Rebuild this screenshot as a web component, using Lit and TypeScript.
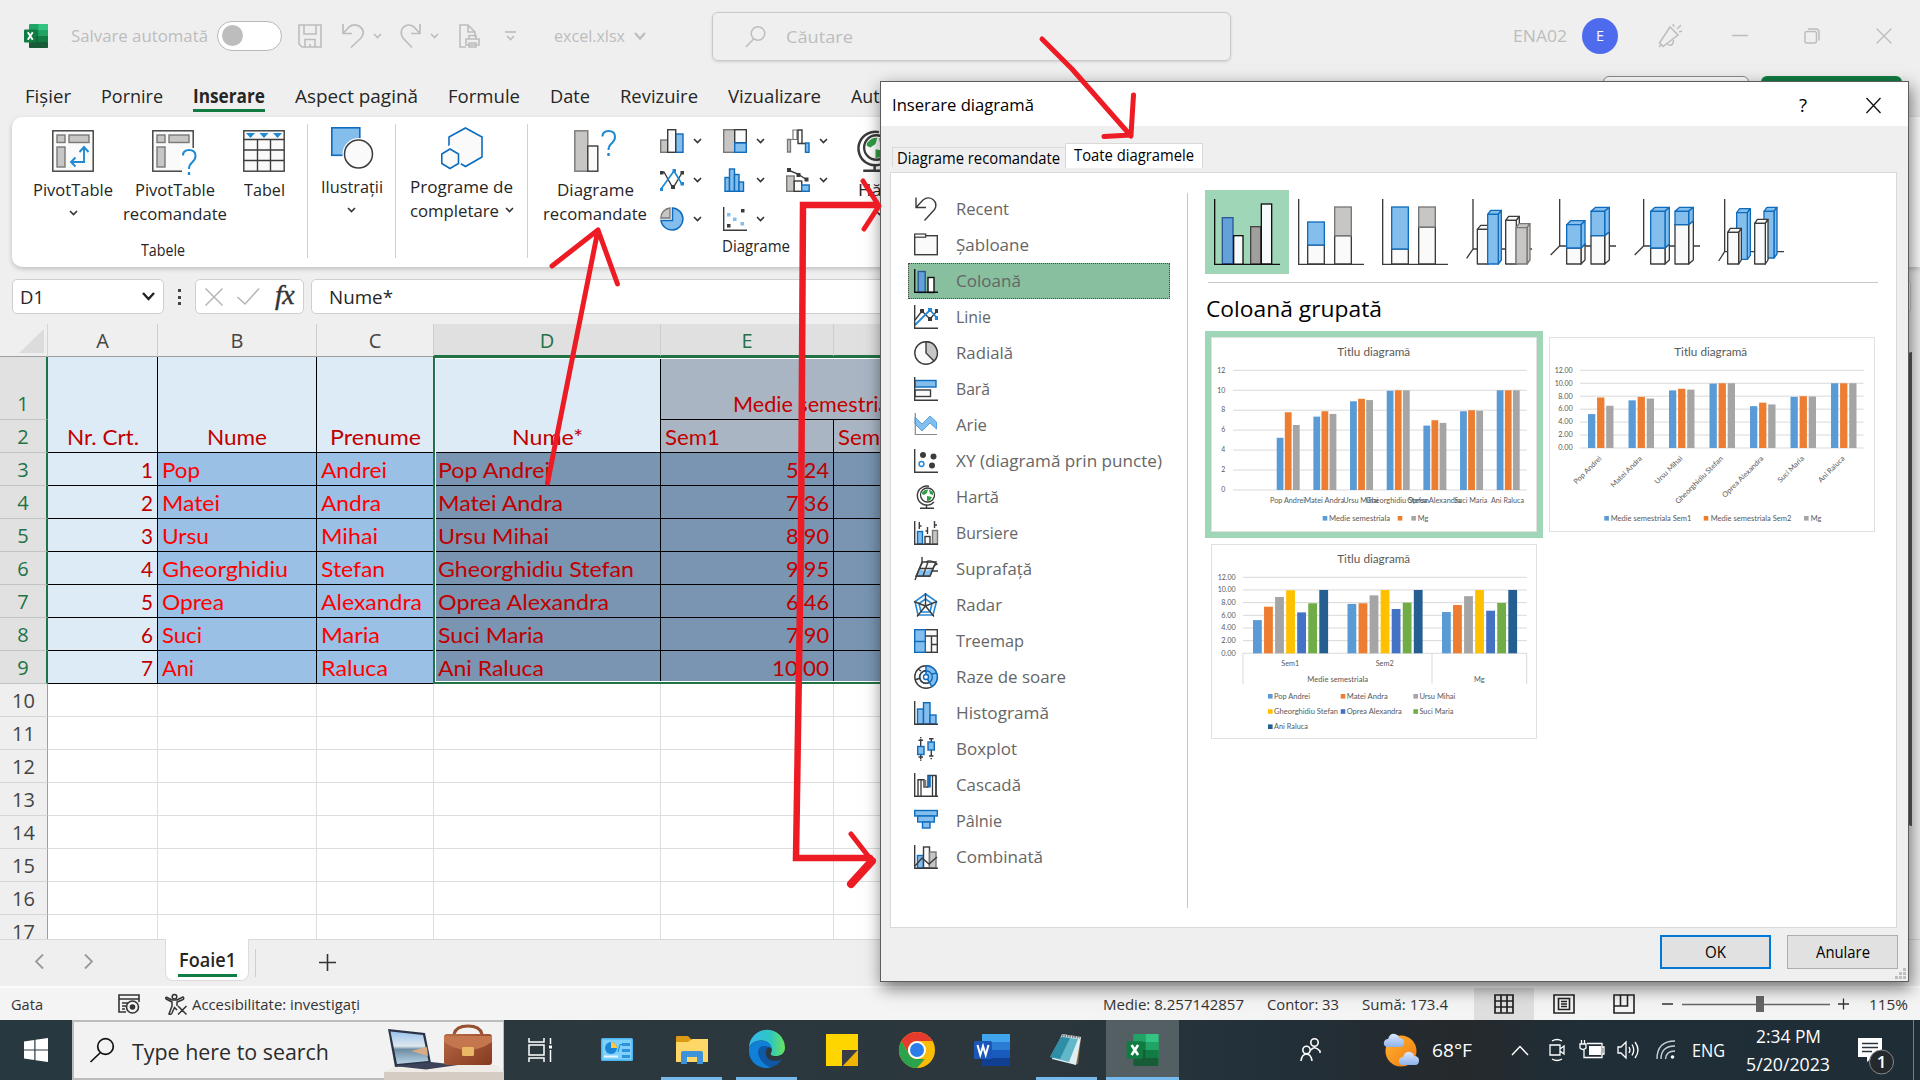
import { LitElement, html, svg, css } from "lit";
import { customElement, property } from "lit/decorators.js";
import { classMap } from "lit/directives/class-map.js";

/** A run of text squeezed or stretched horizontally to a given width. */
@customElement("fit-text")
class FitText extends LitElement {
  @property({ type: Number }) w = 0;
  static styles = css`
    :host { display: inline-block; white-space: nowrap; line-height: 24px; height: 24px; flex: none; text-align: left; }
    span { display: inline-block; transform-origin: 0 50%; }
  `;
  firstUpdated() {
    const s = this.renderRoot.querySelector("span") as HTMLElement;
    const natural = s.getBoundingClientRect().width;
    this.style.width = this.w + "px";
    if (natural > 0) s.style.transform = `scaleX(${this.w / natural})`;
  }
  render() { return html`<span><slot></slot></span>`; }
}

const D = "#3b3b3b", B = "#0f6cbd", LB = "#83beec", G = "#c8c6c4", GD = "#797774", W = "#fafafa";
const box = (x: number, y: number, w: number, h: number, f: string, s: string, sw = 1.4) =>
  svg`<rect x=${x} y=${y} width=${w} height=${h} fill=${f} stroke=${s} stroke-width=${sw}></rect>`;
const ln = (d: string, s = D, sw = 1.4, f = "none") => svg`<path d=${d} fill=${f} stroke=${s} stroke-width=${sw}></path>`;
const ic = (w: number, h: number, body: unknown, vb = `0 0 ${w} ${h}`) =>
  html`<svg class="ic" width=${w} height=${h} viewBox=${vb}>${body}</svg>`;
const chev = (c = "#333", w = 9) => ic(w, 6, ln("M1 1L4.5 4.5L8 1", c, 1.6), "0 0 9 6");
const axis = ln("M.7 0V23.3H24", D, 1.4);

const excelLogo = (w: number, h: number) => ic(w, h, svg`
  <rect x="5" y="0" width="19" height="24" rx="1" fill="#21a366"></rect><rect x="14.500" y="0" width="9.500" height="6" fill="#33c481"></rect>
  <rect x="5" y="6" width="9.500" height="6" fill="#107c41"></rect><rect x="5" y="12" width="9.500" height="6" fill="#185c37"></rect>
  <rect x="14.500" y="6" width="9.500" height="6" fill="#21a366"></rect><rect x="14.500" y="12" width="9.500" height="6" fill="#107c41"></rect><rect x="5" y="18" width="19" height="6" rx="1" fill="#185c37"></rect>
  <rect x="0" y="5.500" width="12.500" height="13" rx="1" fill="#107c41"></rect>
  <path d="M3.800 8.300L8.700 15.700M8.700 8.300L3.800 15.700" stroke="#fff" stroke-width="1.900"></path>`, "0 0 24 24");
const globe = svg`<path d="M15 1.2A9.6 9.6 0 1 0 20 17" fill="none" stroke=${D} stroke-width="1.4"></path>
  <circle cx="13.5" cy="10" r="7" fill="#fff" stroke=${D} stroke-width="1.3"></circle>
  <path d="M8 7.5Q11 4 14 4.5L13 8L10 10L8 9Z M15 4.5L19 7V10L16 9Z M13 11L18 12L16 15.5L13 16Z" fill="#2f9e44"></path>
  <path d="M12.5 19.5V23M6 23.3H20" stroke=${D} stroke-width="1.4"></path>`;

const listIcons: Record<string, unknown> = {
  recent: ln("M2 .5V10.5H12M2 10.5L9 3Q14-1 19 2.5Q24 7 20.5 12.5L10.5 23.5"),
  templates: [box(.7, 2.7, 22.6, 19, W, D), box(.7, 1, 11, 3.2, W, D, 1.2)],
  column: [box(4.2, 2.5, 7, 21, "#62a2d8", "#2b579a"), box(14, 8.5, 6, 15, "#fff", "#111"), ln("M.7 0V23.3H24", "#111")],
  line: [ln("M1 15L8 6L16 14L23 6"), ln("M1 20L16 5L23 13", "#2488d8", 1.8), svg`<path d="M6 4h4v4h-4zM14 12h4v4h-4zM21 4h3v4h-3z" fill=${D}></path><path d="M14 3h4v4h-4zM21 11h3v4h-3z" fill="#2488d8"></path>`, axis],
  pie: [svg`<circle cx="12" cy="12" r="11.2" fill=${W} stroke=${D} stroke-width="1.4"></circle>`, ln("M12 .8A11.2 11.2 0 0 1 20 20L12 12Z", D, 1.4, G)],
  bar: [box(1, 3.5, 21, 6.5, LB, B), box(1, 13, 15.5, 6.5, W, D), axis],
  area: [ln("M1 4L8 11L16 3L22.5 9V16L16 10L8 18L1 11Z", "#5aa5e0", 1, LB), ln("M1.3 0V21.5H23", "#8a8886", 1.2)],
  scatter: [svg`<circle cx="9" cy="6" r="3" fill=${D}></circle><circle cx="19.5" cy="7.5" r="3" fill=${D}></circle><circle cx="18" cy="16.5" r="3" fill=${D}></circle><circle cx="7.5" cy="15" r="2.4" fill="#fff" stroke="#2488d8" stroke-width="1.5"></circle>`, axis],
  map: globe,
  stock: [box(3.5, 10.5, 5, 12.5, LB, B), box(11, 15.5, 5, 7.5, W, D), box(18.5, 9.5, 5, 13.5, G, GD), ln("M5.3 1V8M5.3 5H7.5M13.5 6V13M13.5 10H11.5M20.5 0V7M20.5 4H23"), axis],
  surface: [ln("M8.5 5H22L16 19H2Z", D, 1.4, W), svg`<path d="M5 12L11 14L19 12L16.5 19H2Z" fill=${LB}></path>`, ln("M8 0V5L1 23M6 11.500H19M14 5L9 19M24 14H18M12 5Q16 2 23 7L20 9L16 19H2")],
  radar: [ln("M11.5 1L22.5 8.5L19 22H4L1 8.5Z", "#2488d8", 1.6, "#fff"), ln("M11.5 6L18 10.5L16 19H7L5 10.5Z", "#2488d8", 1.6), ln("M11.5 0V13L3 23.5M11.5 13L20 23.5M11.5 13L0 8.5M11.5 13L23 8.5")],
  treemap: [box(11, .7, 12.3, 22.6, W, D), box(.7, .7, 10.6, 22.6, LB, B), ln("M.7 12.5H11.3", B), ln("M11.3 7H23.3M17.5 7V23M17.5 15.5H23.3")],
  sunburst: [svg`<circle cx="12" cy="12" r="11.2" fill=${W} stroke=${D} stroke-width="1.4"></circle>`, ln("M12 .8A11.2 11.2 0 0 1 18 21.6L12 12Z", B, 1.5, LB), svg`<circle cx="12" cy="12" r="6.3" fill="none" stroke=${B} stroke-width="1.4"></circle><circle cx="12" cy="12" r="2.5" fill="#fff" stroke=${B} stroke-width="1.4"></circle>`, ln("M12 5.7A6.3 6.3 0 1 0 15 17.500M1 15L6 13M7 6L4 4"), ln("M17.500 9L23 8", B)],
  histogram: [box(3.5, 8, 6, 15, LB, B), box(9.5, 1.7, 6.5, 21.3, LB, B), box(16, 14, 6, 9, LB, B), axis],
  boxplot: [ln("M6.7 2V22M17.3 1V19M4.5 3.2H9M4.5 20H9M15 1.7H19.5M15 19H19.5"), svg`<path d="M6 0h1.5v1.3h-1.5zM6 22.5h1.5v1.3h-1.5zM16.5 21h1.5v1.3h-1.5z" fill=${D}></path>`, box(3.7, 9.5, 6.3, 8, LB, B), box(14, 5, 6.3, 8, LB, B)],
  waterfall: [ln("M4 23V6.7H10V14H14V2.5H22V23"), ln("M7 7V23M18.5 3V23M22 3V23", D, 1.3), ln("M11 7V14.5", GD, 2.6), ln("M15.5 14.5V2.5", B, 2.6), axis],
  funnel: [box(.7, 1.5, 22.6, 5.5, LB, B), box(3.7, 7, 16.6, 6, LB, B), box(8.5, 13, 7.5, 6, LB, B)],
  combo: [box(3.5, 10.5, 6, 12.5, LB, B), box(9.5, 2, 6, 21, W, D), box(15.5, 7, 6.5, 16, G, GD), ln("M1 21L8 13L15 19L23 12"), axis],
};
const kinds: [string, number, string][] = [
  ["Recent", 53, "recent"], ["Șabloane", 73, "templates"], ["Coloană", 65, "column"], ["Linie", 35, "line"], ["Radială", 57, "pie"], ["Bară", 34, "bar"],
  ["Arie", 31, "area"], ["XY (diagramă prin puncte)", 206, "scatter"], ["Hartă", 43, "map"], ["Bursiere", 62, "stock"], ["Suprafață", 76, "surface"],
  ["Radar", 46, "radar"], ["Treemap", 68, "treemap"], ["Raze de soare", 110, "sunburst"], ["Histogramă", 93, "histogram"], ["Boxplot", 61, "boxplot"],
  ["Cascadă", 65, "waterfall"], ["Pâlnie", 46, "funnel"], ["Combinată", 87, "combo"],
];

/* A column with a visible top and right side, for the 3-D chart kinds. */
const prism = (x: number, y: number, w: number, h: number, dx: number, dy: number, f: string, s: string) =>
  svg`<g fill=${f} stroke=${s} stroke-width="4" stroke-linejoin="round"><path d=${`M${x} ${y}L${x + dx} ${y - dy}H${x + w + dx}L${x + w} ${y}Z`}></path>
  <path d=${`M${x + w} ${y}L${x + w + dx} ${y - dy}V${y + h - dy}L${x + w} ${y + h}Z`}></path><rect x=${x} y=${y} width=${w} height=${h}></rect></g>`;
const subtypes: [number, unknown][] = [
  [72, [box(97, 113, 32, 138, "#62a2d8", "#2b579a", 4), box(131, 167, 28, 86, "#f7fafa", "#111", 4), box(182, 140, 30, 112, "#a19f9d", "#444", 4), box(214, 72, 31, 180, "#f7fafa", "#111", 4), ln("M74 57V253H270", "#111", 4)]],
  [324, [box(353, 195, 50, 57, W, D, 4), box(353, 126, 50, 69, LB, B, 4), box(434, 167, 50, 85, W, D, 4), box(434, 81, 50, 86, G, GD, 4), ln("M326 57V253H522", D, 4)]],
  [576, [box(605, 207, 50, 45, W, D, 4), box(605, 81, 50, 126, LB, B, 4), box(686, 141, 50, 111, W, D, 4), box(686, 81, 50, 60, G, GD, 4), ln("M578 57V253H774", D, 4)]],
  [828, [ln("M849 57V207L830 235M849 207H1026", D, 4), prism(862, 148, 32, 104, 10, 12, W, D), prism(893, 103, 32, 149, 9, 12, LB, B), prism(947, 121, 32, 131, 9, 12, W, D), prism(978, 143, 33, 109, 9, 12, G, GD)]],
  [60, [ln("M89 57V198L62 225M89 198H258", D, 4), prism(110, 204, 43, 48, 12, 12, W, D), prism(110, 134, 43, 70, 12, 12, LB, B), prism(183, 167, 41, 85, 14, 12, W, D), prism(183, 94, 41, 73, 14, 12, LB, B)]],
  [312, [ln("M341 57V198L314 225M341 198H510", D, 4), prism(362, 204, 43, 48, 13, 12, W, D), prism(362, 94, 43, 110, 13, 12, LB, B), prism(435, 134, 41, 118, 14, 12, W, D), prism(435, 94, 41, 40, 14, 12, LB, B)]],
  [564, [ln("M584 57V215L566 243M584 215H762", D, 4), prism(620, 98, 32, 140, 9, 12, LB, B), prism(702, 94, 30, 140, 9, 12, LB, B), prism(593, 157, 33, 95, 8, 12, W, D), prism(674, 130, 32, 122, 8, 12, W, D)]],
];

/* Chart data: first semester, second semester, overall mean. */
const people = ["Pop Andrei", "Matei Andra", "Ursu Mihai", "Gheorghidiu Stefan", "Oprea Alexandra", "Suci Maria", "Ani Raluca"];
const nameW = [36, 41, 36, 64, 55, 34, 34];
const sem1 = [5.24, 7.36, 8.9, 9.95, 6.46, 7.9, 10], sem2 = [7.8, 7.9, 9.15, 10, 7, 8, 10], mg = [6.52, 7.63, 9.02, 10, 6.73, 7.95, 10];
const C = ["#5b9bd5", "#ed7d31", "#a5a5a5", "#ffc000", "#4472c4", "#70ad47", "#255e91"];
const tx = (x: number, y: number, s: string, w: number, a = "start", size = 7.2) =>
  svg`<text x=${x} y=${y} font-size=${size} text-anchor=${a} textLength=${w} lengthAdjust="spacingAndGlyphs" fill="#595959">${s}</text>`;
const yAxis = (x0: number, x1: number, top: number, unit: number, lx: number, dec: boolean) => [12, 10, 8, 6, 4, 2, 0].map((v) => {
  const y = top + (12 - v) * unit, s = dec ? v.toFixed(2) : String(v);
  return svg`<path d=${`M${x0} ${y}H${x1}`} stroke="#d9d9d9"></path>${tx(lx, y + 2.3, s, dec ? (v > 9 ? 18 : 14.5) : v > 9 ? 8 : 4, "end", 7)}`;
});
const bar = (x: number, y0: number, w: number, h: number, c: string) => svg`<rect x=${x} y=${y0 - h} width=${w} height=${h} fill=${c}></rect>`;
const key = (x: number, y: number, c: string) => svg`<rect x=${x} y=${y - 2.3} width="4.6" height="4.6" fill=${c}></rect>`;
const title = (x: number) => tx(x, 19, "Titlu diagramă", 73, "middle", 11.5);

const chart1 = html`<svg class="chart" width="326" height="195">${title(162.7)}${yAxis(22, 315.7, 33.3, 9.97, 14.3, false)}
  ${people.map((n, i) => svg`${[sem1, sem2, mg].map((s, k) => bar(65.7 + i * 36.67 + k * 8.1, 153, 6.8, s[i] * 9.97, C[k]))}
    ${tx(76.5 + i * 36.67, 166, n, nameW[i] - 1, "middle")}`)}
  ${key(111.7, 181.3, C[0])}${tx(118, 184, "Medie semestriala", 61)}${key(186.7, 181.3, C[1])}${key(200.3, 181.3, C[2])}${tx(206.7, 184, "Mg", 10.6)}</svg>`;
const chart2 = html`<svg class="chart" width="326" height="195">${title(161.7)}${yAxis(31, 314.7, 33.3, 6.475, 23.7, true)}
  ${people.map((n, i) => svg`${[sem1, sem2, mg].map((s, k) => bar(39 + i * 40.5 + k * 9.1, 111, 7.3, s[i] * 6.475, C[k]))}
    <g transform=${`translate(${53 + i * 40.5} 122) rotate(-45)`}>${tx(0, 0, n, nameW[i], "end")}</g>`)}
  ${key(55.3, 181.3, C[0])}${tx(61.7, 184, "Medie semestriala Sem1", 80.6)}${key(154.7, 181.3, C[1])}${tx(161.7, 184, "Medie semestriala Sem2", 80.6)}${key(255, 181.3, C[2])}${tx(261.7, 184, "Mg", 10.6)}</svg>`;
const chart3 = html`<svg class="chart" width="326" height="195">${title(162.7)}${yAxis(32, 315.7, 33.3, 6.333, 24.7, true)}
  ${[sem1, sem2, mg].map((s, g) => s.map((v, i) => bar(42 + g * 94.5 + i * 11.05, 109.3, 8.8, v * 6.333, C[i])))}
  <path d="M32 109V140M221 109V140M315.7 109V140" stroke="#d9d9d9" fill="none"></path>
  ${tx(79.3, 122, "Sem1", 18, "middle")}${tx(173.7, 122, "Sem2", 18, "middle")}${tx(126.7, 138, "Medie semestriala", 60.7, "middle")}${tx(268.3, 138, "Mg", 10.6, "middle")}
  ${people.map((n, i) => { const x = 57 + (i % 3) * 72.7, y = 152.3 + Math.floor(i / 3) * 15.2; return svg`${key(x, y, C[i])}${tx(x + 6, y + 2.7, n, nameW[i])}`; })}</svg>`;

const rows: [string, number, string, number, number, string, number][] = [
  ["Pop", 38, "Andrei", 66, 112, "5.24", 43], ["Matei", 58, "Andra", 60, 125, "7.36", 43], ["Ursu", 47, "Mihai", 57, 111, "8.90", 43],
  ["Gheorghidiu", 126, "Stefan", 64, 196, "9.95", 43], ["Oprea", 62, "Alexandra", 101, 171, "6.46", 43], ["Suci", 40, "Maria", 59, 106, "7.90", 43], ["Ani", 32, "Raluca", 67, 106, "10.00", 57],
];

/* Ribbon icons */
const pivot = [box(.8, .8, 40.4, 40.4, W, D), box(5, 5, 8, 7.5, G, GD), box(17, 5, 20, 7.5, G, GD), box(5, 17, 8, 20, G, GD)];
const q = (x: number, y: number) => svg`<g transform=${`translate(${x} ${y})`}><path d="M1 6.5Q1 1 7 1Q13.5 1 13.5 7Q13.5 10.5 10 13.5Q7 16 7 20" fill="none" stroke="#1f8ad2" stroke-width="2"></path><rect x="5.8" y="23" width="2.4" height="3" fill="#1f8ad2"></rect></g>`;
const rec = ic(46, 42, [pivot, svg`<path d="M28 18h18v27h-16v-8h-2z" fill="#fff"></path>`, q(30, 19)]);
const small = [
  [box(.7, 11, 7, 12.3, G, GD), box(15.5, 5, 7.5, 18.3, LB, B), box(7.7, .7, 8, 22.6, W, D)],
  [box(.7, .7, 11, 22.6, G, GD), box(11.7, .7, 11.6, 13, W, D), box(11.7, 14, 11.6, 9.3, LB, B)],
  [ln("M1.5 23V10.5H4.5V23Z", GD, 1.3, G), ln("M4.5 10.5H7V1H11V10.5H7", GD, 1.2), ln("M12 1H16V14.5H12Z"), ln("M16 14.5H20", D), box(19.5, 14, 3.5, 9.3, LB, B)],
  [ln("M1 5L4 4L13 20L22.5 4"), ln("M1 21L14 3L22.5 17", "#1f8ad2", 1.7), svg`<path d="M0 3h3.5v3.5h-3.5zM11 17h4v4h-4zM20.5 3h3.5v3.5h-3.5z" fill=${D}></path><path d="M12.5 1h3.5v3.5h-3.5zM20.5 14h3.5v3.5h-3.5zM0 20h3v3h-3z" fill="#1f8ad2"></path>`],
  [box(2, 9.5, 4.5, 13.8, LB, B), box(6.5, 1, 5, 22.3, LB, B), box(11.5, 6.5, 4.5, 16.8, LB, B), box(16, 14, 4.5, 9.3, LB, B)],
  [box(.7, 8, 7.5, 15.3, G, GD), box(8.2, 13, 7.5, 10.3, W, D), box(15.7, 17, 7.5, 6.3, LB, B), ln("M2 2L12 6L21 12"), svg`<path d="M1 0h4v4h-4zM10.5 5h4v4h-4zM18.5 9.500h4v4h-4z" fill=${D}></path>`],
  [ln("M12.500 1A11 11 0 1 1 1 13.500H12.500Z", B, 1.5, LB), ln("M10 11V1A10 10 0 0 0 .8 11Z", GD, 1.3, G)],
  [ln("M.7 0V23.3H24"), svg`<path d="M4 17h3.500v3.500h-3.500zM18 2h3.500v3.500h-3.500z" fill=${D}></path><path d="M4 6h3.500v3.500h-3.500zM10 10.500h3.500v3.500h-3.500zM17.500 15h3.500v3.500h-3.500z" fill=${LB}></path>`],
];

@customElement("app-root")
class AppRoot extends LitElement {
  static styles = css`
    :host { display: block; width: 1920px; height: 1080px; position: relative; overflow: hidden; background: #efefef; color: #262626; font-family: "Open Sans", "Noto Sans", sans-serif; font-size: 17px; }
    * { box-sizing: border-box; }
    svg { display: block; overflow: visible; flex: none; }
    .page { display: flex; flex-direction: column; width: 1920px; height: 1080px; }
    .row { display: flex; align-items: center; }
    .titlebar { height: 60px; padding-left: 24px; color: #bdbdbd; flex: none; margin-bottom: 12px; }
    .toggle { width: 65px; height: 30px; border: 1px solid #b8b8b8; border-radius: 15px; background: #fff; margin: 12px 16px 0 9px; padding: 3px 4px; }
    .knob { width: 21px; height: 21px; border-radius: 50%; background: #bdbdbd; }
    .titlebar > fit-text, .titlebar > svg { margin-top: 12px; }
    .titlebar .autosave { margin-left: 23px; }
    .m9 { margin-left: 9px; } .m20 { margin-left: 20px; } .m18 { margin-left: 18px; } .m26 { margin-left: 25px; } .m38 { margin-left: 38px; }
    .search { display: flex; align-items: center; width: 519px; height: 49px; border: 1px solid #c9c9c9; border-radius: 6px; box-shadow: 0 1px 3px #0002; margin: 13px 0 0 66px; padding-left: 32px; gap: 20px; }
    .user { margin-left: 282px; }
    .avatar { width: 36px; height: 36px; border-radius: 50%; background: #4f6bed; color: #fff; display: flex; align-items: center; justify-content: center; font-size: 14px; margin: 12px 40px 0 15px; }
    .winbtns { display: flex; align-items: center; gap: 56px; margin: 12px 0 0 50px; }
    .tabs { height: 45px; display: flex; padding: 12px 0 0 25px; font-size: 19px; flex: none; gap: 30px; }
    .tab { height: 28px; display: flex; flex: none; }
    .tab.on { font-weight: 700; height: 28px; border-bottom: 3px solid #107c41; }
    .corner { display: flex; margin-left: auto; gap: 12px; margin-top: -8px; margin-right: 18px; }
    .corner i { display: block; width: 146px; height: 30px; border: 1px solid #8a8a8a; border-radius: 6px; background: #fff; }
    .corner i.g { width: 141px; background: #107c41; border: 0; }
    .ribbon { height: 150px; margin: 0 0 12px 12px; background: #fff; border-radius: 10px 0 0 10px; box-shadow: 0 2px 5px #0003; display: flex; padding-top: 7px; flex: none; overflow: hidden; clip-path: inset(-2px 0 -8px -6px); }
    .grp { display: flex; flex-direction: column; border-right: 1px solid #d1d1d1; height: 134px; flex: none; }
    .btns { display: flex; height: 115px; }
    .b { display: flex; flex-direction: column; align-items: center; text-align: center; flex: none; }
    .b svg.ic { margin-bottom: 6px; }
    .b.tbl { margin-left: 6px; }
    .b.mapb { margin-left: 7px; }
    .g1 { width: 296px; padding-left: 21px; } .g1 .btns { padding-top: 6px; gap: 10px; }
    .g2 { width: 88px; padding: 3px 0 0; align-items: center; } .g3 { width: 132px; padding-top: 3px; align-items: center; }
    .g4 { width: 500px; border: 0; padding: 0 0 0 15px; }
    .g4 .btns { padding-top: 6px; }
    .cap { font-size: 16px; } .g1 .cap { padding-left: 108px; height: 20px; } .g4 .cap { padding-left: 179px; margin-top: -1px; }
    .chevbox { height: 24px; display: flex; align-items: center; justify-content: center; gap: 6px; padding-bottom: 2px; }
    .chevbox fit-text { margin-top: 2px; }
    .b .chevbox svg.ic { margin: 0; }
    .smallgrid { display: grid; grid-template-columns: repeat(3, 63px); grid-auto-rows: 24px; row-gap: 15px; margin: -1px 0 0 13px; }
    .smallgrid div { display: flex; gap: 9px; align-items: center; }
    .fbar { height: 36px; display: flex; align-items: center; padding: 0 0 1px 12px; flex: none; font-size: 18px; margin-bottom: 9px; }
    .fbox { height: 35px; background: #fff; border: 1px solid #cfcfcf; border-radius: 5px; display: flex; align-items: center; flex: none; }
    .name { width: 152px; padding: 0 8px 0 7px; justify-content: space-between; }
    .dots { width: 4px; height: 16px; margin: 0 13px 0 14px; border-left: 3px dotted #444; }
    .fx { width: 109px; padding-left: 9px; gap: 14px; margin-right: 7px; }
    .fx i { font: italic 28px "Liberation Serif", serif; color: #333; line-height: 24px; margin: -4px 0 0 1px; letter-spacing: -0.5px; -webkit-text-stroke: 0.4px #333; }
    .formula { width: 1600px; padding-left: 17px; }
    .sheet { height: 615px; overflow: hidden; display: grid; background: #fff; flex: none; width: 1906px;
      grid-template-columns: 48px 110px 159px 117px 227px 173px 250px 822px; grid-template-rows: 33px 63px repeat(16, 33px); font-family: Lato, "Open Sans", sans-serif; font-size: 21.5px; }
    .ch2, .rh { font-family: "Open Sans", sans-serif; font-size: 20px; display: flex; align-items: center; justify-content: center; color: #444; background: #efefef; }
    .ch2 { border-right: 1px solid #cdcdcd; border-bottom: 1px solid #9f9f9f; padding-top: 1px; }
    .ch2.sel { background: #e0e0e0; color: #217346; border-bottom: 2px solid #217346; }
    .rh { border-right: 1px solid #9f9f9f; border-bottom: 1px solid #d5d5d5; line-height: 24px; align-items: flex-end; padding-bottom: 3px; }
    .rh.sel { background: #e1e1e1; color: #217346; border-right: 2px solid #217346; border-bottom-color: #c3c3c3; }
    .corner0 { border-right: 1px solid #d5d5d5; border-bottom: 1px solid #9f9f9f; background: #efefef; display: flex; align-items: flex-end; justify-content: flex-end; padding: 0 3px 3px 0; }
    .c { border-right: 1px solid #000; border-bottom: 1px solid #000; display: flex; align-items: flex-end; padding: 0 4px 3px; color: #c00000; overflow: hidden; }
    .c fit-text { line-height: 24px; }
    .c.e { border-color: #dedede; }
    .hd { background: #ddebf7; justify-content: center; } .num { background: #ddebf7; justify-content: flex-end; }
    .nm { background: #9bc0e6; color: #f00; } .dk { background: #7995b2; } .mid { background: #a9b5c3; }
    .r { justify-content: flex-end; }
    .merged { grid-area: 2 / 6 / 3 / 8; padding-left: 72px; padding-bottom: 3px; }
    .selbox { grid-area: 2 / 5 / 11 / 8; border: 2px solid #217346; margin: -1px 0 0 -1px; box-shadow: inset 0 0 0 1px #fff; z-index: 1; }
    .sheetbar { height: 49px; border-top: 1px solid #d8d8d8; display: flex; flex: none; padding-left: 35px; border-bottom: 2px solid #fbfbfb; }
    .stab { width: 84px; height: 42px; background: #fff; border: 1px solid #dcdcdc; border-top: 0; border-radius: 0 0 8px 8px; margin: -1px 6px 0 72px; display: flex; flex-direction: column; align-items: center; padding-top: 8px; font-size: 19px; font-weight: 600; }
    .stab div { height: 30px; border-bottom: 3px solid #107c41; padding: 0 1px; }
    .sep { width: 1px; height: 28px; background: #cfcfcf; margin: 9px 63px 0 0; }
    .nav { margin-top: 14px; } .nav.next { margin-left: 40px; }
    .status { height: 32px; background: #f4f4f4; font-size: 15px; display: flex; align-items: center; flex: none; padding-left: 11px; color: #333; }
    .s1 { margin-left: 75px; } .s2 { margin-left: 25px; } .acc { margin-left: 5px; } .avg { margin-left: 743px; } .cnt { margin-left: 23px; } .zoom { margin-left: 20px; } .s3 { margin-left: 8px; }
    .viewbtn { width: 60px; height: 32px; display: flex; align-items: center; justify-content: center; } .viewbtn.on { background: #dedede; margin-left: 26px; }
    .taskbar { height: 60px; background: linear-gradient(90deg, #283840, #2b383d 30%, #2b373c 55%, #22303a 66%, #25292c 76%, #202e37 82%, #1f2d36); display: flex; flex: none; color: #fff; }
    .start { width: 72px; display: flex; align-items: center; justify-content: center; }
    .tsearch { width: 432px; height: 60px; background: #f2f2f2; border: 2px solid #bcbcbc; border-right-width: 1px; display: flex; align-items: center; padding-left: 16px; color: #2b2b2b; font-size: 22px; }
    .tsearch fit-text { margin-left: 18px; margin-top: 1px; }
    .tsearch svg:last-child { margin-left: 55px; }
    .app { height: 60px; display: flex; align-items: center; justify-content: center; width: 61px; border-bottom: 3px solid transparent; padding-top: 2px; flex: none; }
    .app.run { border-color: #76b9ed; } .app.act { width: 73px; background: #545f64; }
    .apps { display: flex; gap: 14px; padding-left: 5px; } .app.view { margin-right: 2px; } .app.act { margin-left: -5px; }
    .tray { display: flex; align-items: center; font-size: 18px; padding-left: 121px; }
    .t1 { margin-left: 62px; } .t2 { margin-left: 12px; } .t3 { margin-left: 39px; } .t4 { margin-left: 20px; } .t5 { margin-left: 15px; } .t6 { margin-left: 13px; } .t7 { margin-left: 17px; } .t8 { margin-left: 17px; }
    .clock { display: flex; flex-direction: column; align-items: center; gap: 4px; margin-left: 21px; font-size: 18px; }
    .note { margin: 12px 0 0 28px; }
    .end { width: 1px; background: #75808a; margin-left: 19px; height: 60px; }

    .dialog { position: absolute; left: 880px; top: 81px; width: 1029px; height: 901px; background: #efefef; border: 1px solid #5c5c5c; box-shadow: 2px 6px 16px #0008; display: flex; flex-direction: column; color: #000; z-index: 3; font-size: 16px; }
    .dtitle { height: 44px; background: #fff; display: flex; align-items: center; padding: 2px 27px 0 11px; }
    .dtitle .qm { margin-left: auto; margin-right: 59px; font-size: 19px; }
    .dtabs { height: 46px; display: flex; align-items: flex-end; padding: 0 0 5px 11px; flex: none; }
    .dt { height: 20px; width: 173px; border: 1px solid #d9d9d9; border-bottom: 0; border-right: 0; padding-left: 4px; display: flex; align-items: center; }
    .dt.on { height: 25px; width: 138px; background: #fff; border-right: 1px solid #d9d9d9; padding: 0 0 2px 8px; margin-bottom: -1px; }
    .panel { margin: 0 0 0 9px; width: 1007px; height: 756px; background: #fff; border: 1px solid #d9d9d9; display: flex; flex: none; }
    .list { width: 297px; height: 715px; margin-top: 20px; padding-left: 17px; border-right: 1px solid #c6c6c6; display: flex; flex-direction: column; }
    .item { height: 36px; width: 262px; display: flex; align-items: center; gap: 18px; padding-left: 5px; border: 1px dotted transparent; color: #666; font-size: 17px; flex: none; position: relative; top: -2px; }
    .item.on { background: #87bf9f; border-color: #5c3b47; }
    .main { padding: 17px 0 0 17px; width: 690px; }
    .subs { display: flex; } .sub { width: 84px; height: 84px; padding: 9px; } .sub.on { background: #9fd6b8; }
    .hr { height: 1px; width: 670px; background: #c6c6c6; margin: 8px 0 13px 3px; }
    .h { font-size: 22.5px; margin-left: 1px; height: 35px; display: flex; align-items: center; padding-bottom: 9px; }
    .cards { display: grid; grid-template-columns: 338px 338px; grid-template-rows: 207px 207px; }
    .card { border: 6px solid transparent; width: 338px; height: 207px; } .card.on { border-color: #9fd6b8; }
    .chart { outline: 1px solid #e1e1e1; outline-offset: -1px; background: #fff; font-family: Lato, sans-serif; }
    .foot { display: flex; justify-content: flex-end; gap: 16px; padding: 7px 10px 0 0; }
    .btn { width: 111px; height: 34px; border: 1px solid #adadad; background: #e1e1e1; display: flex; align-items: center; justify-content: center; font-size: 15.5px; } .btn.ok { border: 2px solid #0078d7; }
    .grip { margin: -1px 2px 0 auto; }
    .edge { position: absolute; right: 0; top: 352px; width: 12px; height: 474px; border-left: 4px solid #5a5a5a; border-radius: 4px; z-index: 2; }
    .marks { position: absolute; left: 0; top: 0; z-index: 5; }
  `;

  titlebar() {
    const s = "#bdbdbd";
    return html`<div class="row titlebar">
      ${excelLogo(24, 24)}<fit-text class="autosave" w="137">Salvare automată</fit-text>
      <div class="toggle"><div class="knob"></div></div>
      ${ic(24, 24, [ln("M1 1H23V23H4L1 20Z", s, 1.6), ln("M6 1V10H18V1M7 23V15.500H17V23M12 20V23", s, 1.6)])}
      <span class="m20"></span>${ic(22, 24, ln("M1 0V9.500H10M1 9.500L7 3Q12-1 18 2.500Q24 8 19 14L9 23.500", s, 1.7))}
      <span class="m9"></span>${chev(s)}
      <span class="m18"></span>${ic(21, 24, ln("M20 0V9.500H11M20 9.500L14 3Q9-1 3.500 3Q-1 8 3 14L12 23.500", s, 1.7))}
      <span class="m9"></span>${chev(s)}
      <span class="m20"></span>${ic(21, 24, [ln("M7 23H1V1H9L16 8V13M9 1V8H16", s, 1.6), ln("M7 15H20V21H7ZM10 15V11.500H17V15M10 19H17V23H10Z", s, 1.6)])}
      <span class="m26"></span>${ic(11, 10, [ln("M0 1H11", s, 1.7), ln("M2 5L5.500 8.500L9 5", s, 1.6)])}
      <fit-text class="m38" w="71">excel.xlsx</fit-text><span class="m9"></span>${ic(12, 8, ln("M1 1L6 6.500L11 1", s, 2.2))}
      <div class="search">${ic(21, 22, [svg`<circle cx="13" cy="7.500" r="6.800" fill="none" stroke=${s} stroke-width="1.500"></circle>`, ln("M8.500 13L1 21", s, 1.5)])}<fit-text w="67">Căutare</fit-text></div>
      <fit-text class="user" w="54">ENA02</fit-text><div class="avatar"><fit-text w="8">E</fit-text></div>
      ${ic(24, 24, [ln("M12 3L20 11L5 22.500L1.500 19Z", s, 1.5), ln("M9 20Q15 24 15.500 16M15 0L16 3M19 5L23 1M21 8L24 7M1 23L4 20", s, 1.5)])}
      <div class="winbtns">${ic(16, 16, ln("M0 7.500H16", s, 1.5))}${ic(16, 16, [svg`<rect x="1" y="3.500" width="11.500" height="11.500" rx="2" fill="none" stroke=${s} stroke-width="1.500"></rect>`, ln("M4 1H11.500Q15 1 15 4V12.500", s, 1.5)])}${ic(16, 16, ln("M.5 .5L15.500 15.500M15.500 .5L.5 15.500", s, 1.4))}</div>
    </div>`;
  }

  ribbon() {
    const tabs: [string, number][] = [["Fișier", 46], ["Pornire", 62], ["Inserare", 72], ["Aspect pagină", 123], ["Formule", 72], ["Date", 40], ["Revizuire", 78], ["Vizualizare", 93], ["Automatizare", 112]];
    return html`<div class="tabs">${tabs.map(([t, w], i) => html`<div class=${classMap({ tab: true, on: i === 2 })}><fit-text w=${w}>${t}</fit-text></div>`)}
      <div class="corner"><i></i><i class="g"></i></div></div>
    <div class="ribbon">
      <div class="grp g1"><div class="btns">
        <div class="b">${ic(42, 42, [pivot, ln("M32 17V32H19M27.500 22L32 17L36.500 22M23.500 27.500L19 32L23.500 36.500", "#1f8ad2", 1.9)])}<fit-text w="80">PivotTable</fit-text><div class="chevbox">${chev()}</div></div>
        <div class="b">${rec}<fit-text w="80">PivotTable</fit-text><fit-text w="104">recomandate</fit-text></div>
        <div class="b tbl">${ic(42, 42, [box(.8, .8, 40.4, 40.4, W, D), ln("M.8 9.500H41M.8 20H41M.8 30.500H41M14.500 10V41M27.500 10V41", D, 1.4), svg`<path d="M3 3h9l-4.500 5zM16.500 3h9l-4.500 5zM30 3h9l-4.500 5z" fill="#1f8ad2"></path>`])}<fit-text w="41">Tabel</fit-text></div>
      </div><div class="cap"><fit-text w="44">Tabele</fit-text></div></div>
      <div class="grp g2"><div class="b">${ic(42, 42, [box(.8, .8, 28, 27.5, LB, B, 1.6), svg`<circle cx="27.500" cy="27" r="16" fill="#fff"></circle><circle cx="27.500" cy="27" r="14" fill=${W} stroke=${D} stroke-width="1.500"></circle>`])}<fit-text w="62">Ilustrații</fit-text><div class="chevbox">${chev()}</div></div></div>
      <div class="grp g3"><div class="b">${ic(42, 42, [ln("M24.500 1L41 10V30L24.500 39.500L8 30V10Z", "#0f6cbd", 1.6, W), svg`<path d="M9 18L20 25V37L9 44L-2 37V25Z" fill="#fff"></path>`, ln("M9 22L17.500 27V36.500L9 41.500L.8 36.500V27Z", "#0f6cbd", 1.6, W)])}<fit-text w="103">Programe de</fit-text><div class="chevbox"><fit-text w="89">completare</fit-text>${chev()}</div></div></div>
      <div class="grp g4"><div class="btns">
        <div class="b">${ic(42, 42, [box(.8, .8, 13, 40.4, G, GD), box(13.8, 16, 10, 25.2, W, D), svg`<g transform="translate(-0.500 0)">${q(28, 0)}</g>`])}<fit-text w="77">Diagrame</fit-text><fit-text w="104">recomandate</fit-text></div>
        <div class="smallgrid">${small.map((s) => html`<div>${ic(24, 24, s)}${chev()}</div>`)}</div>
        <div class="b mapb">${ic(46, 42, globe, "3 0 24 24")}<fit-text w="42">Hărți</fit-text><div class="chevbox">${chev()}</div></div>
      </div><div class="cap"><fit-text w="68">Diagrame</fit-text></div></div>
    </div>
    <div class="fbar">
      <div class="fbox name"><fit-text w="24">D1</fit-text>${ic(13, 9, ln("M1 1L6.500 7L12 1", "#222", 2.4))}</div><div class="dots"></div>
      <div class="fbox fx">${ic(18, 18, ln("M.5 .5L17.500 17.500M17.500 .5L.5 17.500", "#b5b5b5", 1.5))}${ic(23, 17, ln("M.5 9L8 16L22 .5", "#b5b5b5", 1.5))}<i>fx</i></div>
      <div class="fbox formula"><fit-text w="64">Nume*</fit-text></div>
    </div>`;
  }

  sheet() {
    const heads: [string, number][] = [["Nr. Crt.", 72], ["Nume", 60], ["Prenume", 91], ["Nume*", 71]];
    const at = (r: number, c: number, r2 = r + 1, c2 = c + 1) => `grid-area:${r}/${c}/${r2}/${c2}`;
    return html`<div class="sheet">
      <div class="corner0" style=${at(1, 1)}>${ic(25, 24, svg`<path d="M25 0V24H0Z" fill="#dcdcdc"></path>`)}</div>
      ${["A", "B", "C", "D", "E", "F", ""].map((l, i) => html`<div class=${classMap({ ch2: true, sel: i > 2 })} style=${at(1, i + 2)}>${l}</div>`)}
      ${Array.from({ length: 17 }, (_, i) => html`<div class=${classMap({ rh: true, sel: i < 9 })} style=${at(i + 2, 1)}>${i + 1}</div>`)}
      ${heads.map(([t, w], i) => html`<div class="c hd" style=${at(2, i + 2, 4)}><fit-text w=${w}>${t}</fit-text></div>`)}
      <div class="c mid merged"><fit-text w="172">Medie semestriala</fit-text></div>
      <div class="c mid" style=${at(3, 6)}><fit-text w="55">Sem1</fit-text></div><div class="c mid" style=${at(3, 7)}><fit-text w="55">Sem2</fit-text></div>
      ${rows.map(([a, aw, b, bw, abw, v, vw], i) => html`
        <div class="c num" style=${at(i + 4, 2)}><fit-text w="12">${i + 1}</fit-text></div>
        <div class="c nm" style=${at(i + 4, 3)}><fit-text w=${aw}>${a}</fit-text></div>
        <div class="c nm" style=${at(i + 4, 4)}><fit-text w=${bw}>${b}</fit-text></div>
        <div class="c dk" style=${at(i + 4, 5)}><fit-text w=${abw}>${a} ${b}</fit-text></div>
        <div class="c dk r" style=${at(i + 4, 6)}><fit-text w=${vw}>${v}</fit-text></div>
        <div class="c dk" style=${at(i + 4, 7)}></div>`)}
      ${Array.from({ length: 48 }, (_, k) => html`<div class="c e" style=${at(11 + Math.floor(k / 6), 2 + (k % 6))}></div>`)}
      <div class="selbox"></div>
    </div>`;
  }

  bottom() {
    const k = "#333";
    return html`<div class="sheetbar">
      <div class="nav">${ic(9, 15, ln("M8 .5L1 7.500L8 14.500", "#9a9a9a", 1.8))}</div><div class="nav next">${ic(9, 15, ln("M1 .5L8 7.500L1 14.500", "#9a9a9a", 1.8))}</div>
      <div class="stab"><div><fit-text w="57">Foaie1</fit-text></div></div><div class="sep"></div><div class="nav">${ic(17, 17, ln("M8.500 0V17M0 8.500H17", k, 1.6))}</div>
    </div>
    <div class="status">
      <fit-text w="32">Gata</fit-text><span class="s1"></span>
      ${ic(22, 20, [ln("M8 18H1V1H21V8M1 5H21M4 9H10M4 12H8M4 15H7", k, 1.6), svg`<circle cx="14.500" cy="13" r="6" fill="#f4f4f4" stroke=${k} stroke-width="1.600"></circle><circle cx="14.500" cy="13" r="2.800" fill=${k}></circle>`])}
      <span class="s2"></span>
      ${ic(22, 21, [svg`<circle cx="9.500" cy="2.800" r="2.300" fill="none" stroke=${k} stroke-width="1.500"></circle>`, ln("M1 3Q0 5 3 6L7 8V12L4 20Q6 21 7 19L9.500 13.500L12 16M12 12V8L17 6Q20 5 18 3L12 6H7L1 3M13 12L21.500 20.500M21.500 12L13 20.500", k, 1.5)])}
      <fit-text class="acc" w="168">Accesibilitate: investigați</fit-text>
      <fit-text class="avg" w="141">Medie: 8.257142857</fit-text><fit-text class="cnt" w="72">Contor: 33</fit-text><fit-text class="cnt" w="86">Sumă: 173.4</fit-text>
      <div class="viewbtn on">${ic(20, 20, ln("M1 1H19V19H1ZM1 7H19M1 13H19M7 1V19M13 1V19", "#222", 1.7))}</div>
      <div class="viewbtn">${ic(22, 20, ln("M1 1H21V19H1ZM5.500 4.500H16.500V15.500H5.500ZM8 7.500H14M8 10H14M8 12.500H14", "#222", 1.6))}</div>
      <div class="viewbtn">${ic(22, 20, ln("M1 1H21V19H1ZM7.500 1V12H14.500V1M1 12H7.500", "#222", 1.6))}</div>
      <span class="s3"></span>${ic(187, 18, [ln("M0 9H11M176 9H187M181.500 3.500V14.500", k, 1.3), ln("M20 9.500H168", "#666", 1.6), svg`<rect x="94" y="1" width="8" height="16" fill="#666"></rect>`])}
      <fit-text class="zoom" w="39">115%</fit-text>
    </div>
    <div class="taskbar">
      <div class="start">${ic(24, 24, svg`<path d="M0 3.500L10.300 2V11.400H0ZM11.500 1.800L24 0V11.400H11.500ZM0 12.600H10.300V22L0 20.500ZM11.500 12.600H24V24L11.500 22.200Z" fill="#fff"></path>`)}</div>
      <div class="tsearch">${ic(24, 24, [svg`<circle cx="15.500" cy="8.500" r="7.800" fill="none" stroke="#111" stroke-width="1.700"></circle>`, ln("M10.500 14.500L.5 24", "#111", 1.7)])}<fit-text w="197">Type here to search</fit-text>
        ${ic(120, 60, svg`<defs><linearGradient id="scr" x2="0" y2="1"><stop offset="0" stop-color="#9cc4ee"></stop><stop offset=".45" stop-color="#dfe8ee"></stop><stop offset=".55" stop-color="#6d8da3"></stop><stop offset="1" stop-color="#b9d3e6"></stop></linearGradient><linearGradient id="bag" x2="1" y2="1"><stop offset="0" stop-color="#b96b45"></stop><stop offset="1" stop-color="#84391f"></stop></linearGradient></defs>
          <path d="M0 52L12 45H112L120 52Z" fill="#efebe6"></path><path d="M0 52H120V60H0Z" fill="#d5cdc4"></path>
          <path d="M4 9L41 13L47 43L11 47Z" fill="#2b3346"></path><path d="M6.500 11.500L39 15L44.500 41L13 44Z" fill="url(#scr)"></path><path d="M27 31L43 27L44 36Z" fill="#d9aa86"></path>
          <path d="M10 46L47 42L74 45L42 49.500Z" fill="#3c4257"></path>
          <path d="M70 14Q72 6 84 6Q96 6 98 14" fill="none" stroke="#96502f" stroke-width="3"></path><rect x="60" y="14" width="48" height="31" rx="3" fill="url(#bag)"></rect><path d="M60 16H108V22Q96 30 84 30Q72 30 60 22Z" fill="#c4774f"></path><rect x="78" y="27" width="12" height="9" rx="1.500" fill="#eab765"></rect>`)}
      </div>
      <div class="apps">
      <div class="app view">${ic(24, 24, [ln("M1 0V4H16V0M1 24V20H16V24M1 7H16V17H1ZM22.500 0V6M22.500 12V24", "#fff", 1.5), svg`<rect x="21" y="7.500" width="3" height="3" fill="#fff"></rect>`])}</div>
      <div class="app">${ic(32, 23, svg`<rect width="32" height="23" rx="1.500" fill="#4db5f0"></rect><rect x="1.500" y="1.500" width="29" height="20" fill="#7fd0fa"></rect><circle cx="10" cy="10" r="6" fill="#1a86d8"></circle><path d="M10 10V4A6 6 0 0 1 16 10Z" fill="#ffc83d"></path><path d="M21 5H29V8H21ZM21 11H29V14H21ZM21 17H29V20H21Z" fill="#2b92dc"></path><path d="M3 18.500H17" stroke="#e9f7ff" stroke-width="2"></path><path d="M17 14L19 6.500H21" fill="none" stroke="#1a86d8"></path>`)}</div>
      <div class="app run">${ic(32, 28, svg`<path d="M0 1Q0 0 1 0H12L15 3V8H0Z" fill="#dc9a13"></path><path d="M0 6H12L16 3H32V26H0Z" fill="#ffd768"></path><path d="M5 26V17Q5 15 7 15H25Q27 15 27 17V28H21V21H11V28H5Z" fill="#3d92d8"></path>`)}</div>
      <div class="app run">${ic(36, 36, svg`<defs><linearGradient id="e1" x1="0" x2="1"><stop offset="0" stop-color="#35b6f1"></stop><stop offset=".6" stop-color="#2fc7c0"></stop><stop offset="1" stop-color="#6be35b"></stop></linearGradient></defs><path d="M0 16A18 18 0 0 1 36 15.500C36 22 31 24 27 24C23 24 21 23 22 21C24 18 23 12 16 9C9 7 2 10 0 16Z" fill="url(#e1)"></path><path d="M0 16C3 10 9 7 16 9C20 10 22.500 13 22.500 17C20 14 16 14 14 17C12 25 16 32 22 35.500C10 38 0 30 0 19Z" fill="#1180d8"></path><path d="M9 21C10 28 16 34 22 35.500C27 34 31 31 33 27C28 30 19 30 17 23C16 19 18 16 20 15C12 12 9 16 9 21Z" fill="#0f58a5"></path>`)}</div>
      <div class="app">${ic(32, 32, svg`<rect width="32" height="32" fill="#ffd500"></rect><path d="M16 16H32L17 32H16Z" fill="#3b3b44"></path><path d="M32 16V32H17Z" fill="#f0b400"></path>`)}</div>
      <div class="app">${ic(36, 36, svg`<circle cx="18" cy="18" r="18" fill="#fbbc05"></circle><path d="M18 0A18 18 0 0 1 33.600 9H18A9 9 0 0 0 10.200 22.500L2.400 9A18 18 0 0 1 18 0Z" fill="#e53a2d"></path><path d="M2.400 9L10.200 22.500A9 9 0 0 0 18 27H25.800L18 36A18 18 0 0 1 2.400 9Z" fill="#2ba24c"></path><circle cx="18" cy="18" r="9" fill="#fff"></circle><circle cx="18" cy="18" r="7" fill="#2b7de9"></circle>`)}</div>
      <div class="app">${ic(36, 32, svg`<rect x="8" width="28" height="8" fill="#41a5ee"></rect><rect x="8" y="8" width="28" height="8" fill="#2b7cd3"></rect><rect x="8" y="16" width="28" height="8" fill="#185abd"></rect><rect x="8" y="24" width="28" height="8" fill="#103f91"></rect><rect y="7" width="18" height="18" rx="1.500" fill="#1b57b8"></rect><path d="M3.500 11L6.300 21L9 12L11.700 21L14.500 11" fill="none" stroke="#fff" stroke-width="2"></path>`)}</div>
      <div class="app run">${ic(33, 32, svg`<path d="M12 2L31 4L28 30L24 31Z" fill="#8a6a3c"></path><path d="M12 0L31 3L26 31L2 25Z" fill="#dfeef3"></path><path d="M11 3L28 5L19 28L0 23Z" fill="#62b7c9"></path><path d="M11 3L20 4L10 25L0 23Z" fill="#2e8ea6"></path><path d="M12 1.500L30 3.500" stroke="#777" stroke-width="2.500" stroke-dasharray="1.500 1"></path>`)}</div>
      <div class="app run act">${excelLogo(35, 32)}</div>
      </div>
      <div class="tray">
        ${ic(21, 24, [svg`<circle cx="14.500" cy="4.500" r="3.700" fill="none" stroke="#fff" stroke-width="1.600"></circle><circle cx="6.500" cy="12" r="3.700" fill="none" stroke="#fff" stroke-width="1.600"></circle>`, ln("M11 12Q14 7 20 13V15M1 23Q2 16 6.500 16Q11 16 12 23", "#fff", 1.6)])}
        <span class="t1"></span>
        ${ic(37, 33, svg`<defs><linearGradient id="sun" x2="1" y2="1"><stop offset="0" stop-color="#ffb52e"></stop><stop offset="1" stop-color="#f07a12"></stop></linearGradient><linearGradient id="cl" x2="0" y2="1"><stop offset="0" stop-color="#dbe8fb"></stop><stop offset="1" stop-color="#8fb2ec"></stop></linearGradient></defs><circle cx="18" cy="17" r="15.500" fill="url(#sun)"></circle><path d="M4 13Q0 12 1 8Q2 5 5 5Q7-1 12 0Q16 1 16 4Q21 4 21 8.500Q21 13 17 13Z" fill="url(#cl)"></path><path d="M19 31Q15 30 16 26Q17 23 20 23Q22 17 27 18Q31 19 31 22Q36 22 36 26.500Q36 31 32 31Z" fill="url(#cl)"></path>`)}
        <fit-text class="t2" w="40">68°F</fit-text><span class="t3"></span>
        ${ic(18, 11, ln("M1 10L9 1.500L17 10", "#fff", 1.5))}<span class="t4"></span>
        ${ic(16, 22, ln("M1 6H11V16H1ZM11 10L15 7V15L11 12M3 2Q8-1 13 2M3 20Q8 23 13 20", "#fff", 1.3))}<span class="t5"></span>
        ${ic(24, 20, [svg`<rect x="9" y="6" width="12" height="9" fill="#fff"></rect>`, ln("M7 3.500H22V17.500H4V10M22.500 7H24V14H22.500M0 4H6V8Q3 11 0 8ZM1.500 0V4M4.500 0V4", "#fff", 1.3)])}<span class="t6"></span>
        ${ic(22, 18, ln("M1 6H4L9 1V17L4 12H1ZM12 6Q14 9 12 12M15 3.500Q18.500 9 15 14.500M18 1Q24 9 18 17", "#fff", 1.3))}<span class="t7"></span>
        ${ic(19, 20, [ln("M1 19Q1 1 19 1M5 19Q5 6 19 6M9.500 19Q10 11 19 11", "#c8d0d4", 1.4), svg`<circle cx="16.500" cy="17" r="1.800" fill="#fff"></circle>`])}
        <fit-text class="t8" w="33">ENG</fit-text>
        <div class="clock"><fit-text w="65">2:34 PM</fit-text><fit-text w="84">5/20/2023</fit-text></div>
        <div class="note">${ic(36, 36, svg`<path d="M0 0H24V19H15L9 24V19H0Z" fill="#fff"></path><path d="M4 5.500H20M4 9.500H20M4 13.500H14" stroke="#26343c" stroke-width="1.400"></path><circle cx="23.500" cy="24" r="12" fill="#26292c" stroke="#84898c"></circle><text x="23.500" y="30" font-size="17" text-anchor="middle" fill="#fff" font-weight="600">1</text>`)}</div>
      </div>
      <div class="end"></div>
    </div>`;
  }

  dialog() {
    return html`<div class="dialog">
      <div class="dtitle"><fit-text w="142">Inserare diagramă</fit-text><fit-text class="qm" w="8">?</fit-text>${ic(15, 15, ln("M.5 0L14.500 15M14.500 0L.5 15", "#111", 1.3))}</div>
      <div class="dtabs"><div class="dt"><fit-text w="163">Diagrame recomandate</fit-text></div><div class="dt on"><fit-text w="120">Toate diagramele</fit-text></div></div>
      <div class="panel">
        <div class="list">${kinds.map(([t, w, k]) => html`<div class=${classMap({ item: true, on: k === "column" })}>${ic(24, 24, listIcons[k])}<fit-text w=${w}>${t}</fit-text></div>`)}</div>
        <div class="main">
          <div class="subs">${subtypes.map(([x, b], i) => html`<div class=${classMap({ sub: true, on: i === 0 })}>${ic(66, 66, b, `${x} 57 198 198`)}</div>`)}</div>
          <div class="hr"></div><div class="h"><fit-text w="176">Coloană grupată</fit-text></div>
          <div class="cards"><div class="card on">${chart1}</div><div class="card">${chart2}</div><div class="card">${chart3}</div></div>
        </div>
      </div>
      <div class="foot"><div class="btn ok"><fit-text w="21">OK</fit-text></div><div class="btn"><fit-text w="54">Anulare</fit-text></div></div>
      <div class="grip">${ic(11, 11, svg`<path d="M8 0h3v3h-3zM4 4h3v3h-3zM8 4h3v3h-3zM0 8h3v3h-3zM4 8h3v3h-3zM8 8h3v3h-3z" fill="#bfbfbf"></path>`)}</div>
    </div>`;
  }

  render() {
    return html`<div class="page">${this.titlebar()}${this.ribbon()}${this.sheet()}${this.bottom()}</div>
      <div class="edge"></div>${this.dialog()}
      <svg class="marks" width="1920" height="1080" fill="none" stroke="#ed1c24" stroke-width="5" stroke-linecap="round" stroke-linejoin="round">
        <path d="M547.500 483L572 360L598 230M552 266L598 230L617.500 284"></path>
        <path d="M1042 39L1072 69L1131 136M1104 136.500L1131 135L1133.500 95"></path>
        <path d="M863 181L879 206L864 229M851 834L872 861"></path>
        <path d="M872 861L851 884" stroke-width="8"></path>
        <path d="M876 205H803L801 540L796 858H870" stroke-width="6.500" stroke-linejoin="miter"></path>
      </svg>`;
  }
}
